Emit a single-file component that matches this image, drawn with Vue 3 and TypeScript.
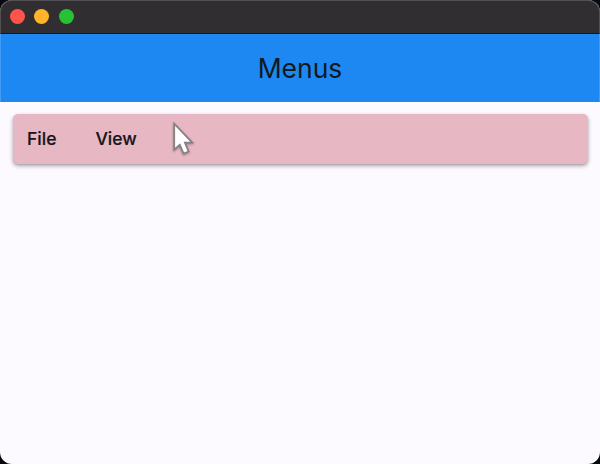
<script setup lang="ts">
const windowControls: string[] = ['close', 'minimize', 'maximize']
const menus: string[] = ['File', 'View']
</script>

<template>
  <div class="desktop">
    <main class="window">
      <div class="titlebar">
        <span v-for="control in windowControls" :key="control" class="control" :class="control"></span>
      </div>
      <header class="appbar"><h1>Menus</h1></header>
      <section class="content">
        <nav class="menubar">
          <button v-for="menu in menus" :key="menu" type="button" class="menu">{{ menu }}</button>
        </nav>
      </section>
      <svg class="cursor" width="26" height="38" viewBox="0 0 26 38">
        <path d="M2.2 2.7 V28.6 L7.8 23.8 L11.6 32.6 L16.6 30.5 L12.9 21.6 H20.3 Z" />
      </svg>
    </main>
  </div>
</template>

<style>
body {
  margin: 0;
}
</style>

<style scoped>
.desktop {
  height: 464px;
  background: #07090f;
  overflow: hidden;
}
.window {
  position: relative;
  display: flex;
  flex-direction: column;
  box-sizing: border-box;
  height: 464px;
  border-radius: 12px;
  overflow: hidden;
  background: #fcfaff;
  font-family: Inter, Roboto, sans-serif;
}
.window::after {
  content: '';
  position: absolute;
  inset: 0 0 auto;
  height: 102px;
  box-sizing: border-box;
  border: 1px solid rgba(255, 255, 255, 0.16);
  border-bottom: 0;
  border-radius: 12px 12px 0 0;
  pointer-events: none;
}
.titlebar {
  display: flex;
  align-items: center;
  gap: 9.5px;
  height: 34px;
  box-sizing: border-box;
  padding: 0 9.5px 1px;
  border-bottom: 1px solid #121820;
  background: #302e30;
}
.control {
  width: 15px;
  height: 15px;
  border-radius: 50%;
}
.close {
  background: #ff534c;
}
.minimize {
  background: #ffb429;
}
.maximize {
  background: #27c136;
}
.appbar {
  display: flex;
  align-items: center;
  justify-content: center;
  height: 68px;
  background: #1e88f2;
}
h1 {
  margin: 0;
  color: #111820;
  font-size: 26.5px;
  font-weight: 400;
  line-height: 34px;
}
.content {
  padding: 12px 12.5px;
}
.menubar {
  display: flex;
  align-items: center;
  height: 49.5px;
  border-radius: 5px;
  background: #e7b8c4;
  box-shadow: 0 2px 4px rgba(0, 0, 0, 0.32), 0 1px 2px rgba(0, 0, 0, 0.1);
}
.menu {
  margin: 0;
  padding: 1px 25px 0 14.5px;
  border: 0;
  background: none;
  color: #17151a;
  font: 500 17.5px/24px Inter, Roboto, sans-serif;
  -webkit-text-stroke: 0.2px #17151a;
}
.menu + .menu {
  padding-left: 14px;
}
.cursor {
  position: absolute;
  left: 172px;
  top: 121px;
  filter: drop-shadow(0 1px 1px rgba(0, 0, 0, 0.3));
}
.cursor path {
  fill: #fff;
  stroke: #858184;
  stroke-width: 1.8;
  stroke-linejoin: miter;
}
</style>
